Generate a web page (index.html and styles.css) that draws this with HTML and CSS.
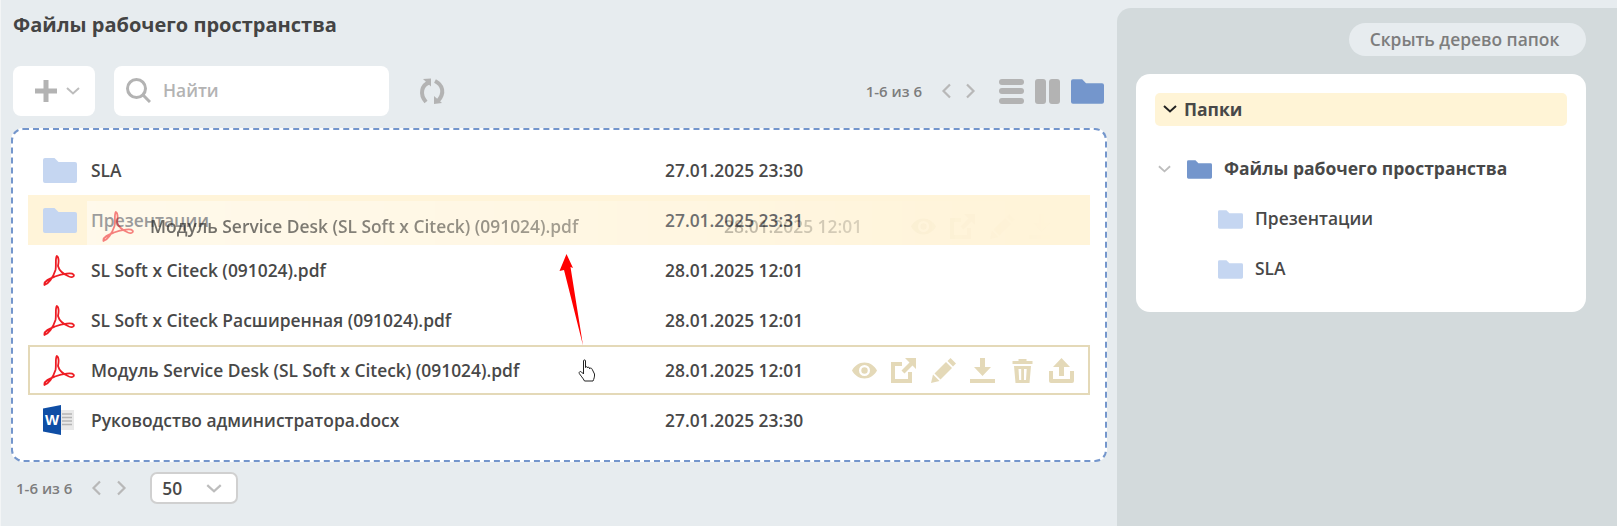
FILE: index.html
```html
<!DOCTYPE html>
<html lang="ru">
<head>
<meta charset="utf-8">
<title>Файлы рабочего пространства</title>
<link rel="stylesheet" href="styles.css">
</head>
<body>
<svg class="sprite" xmlns="http://www.w3.org/2000/svg">
  <defs>
    <symbol id="folder" viewBox="0 0 34 25"><path d="M2 0h9.500l4 4H32a2 2 0 0 1 2 2v17a2 2 0 0 1-2 2H2a2 2 0 0 1-2-2V2a2 2 0 0 1 2-2z"/></symbol>
    <symbol id="pdf" viewBox="0 0 32 31"><path fill="none" stroke-width="1.800" stroke-linejoin="round" d="M1.500 30C5 29 10 23 12.500 15 13.500 10 12 4 13.800 1 15.500 2 16 6 15 11c1 4 5 8 11 10.500 4 1.500 5.500-.5 4.500-2-1.500-2-10.500-1-18.500 2-5 2-11.500 4.500-10.500 8.500z"/></symbol>
    <symbol id="eye" viewBox="0 0 25 25"><path fill-rule="evenodd" d="M12.500 4.500C7 4.500 2.500 8 0 12.500c2.500 4.500 7 8 12.500 8s10-3.500 12.500-8c-2.500-4.500-7-8-12.500-8zm0 2.500a5.500 5.500 0 1 1 0 11 5.500 5.500 0 0 1 0-11z"/><circle cx="12.500" cy="12.500" r="3.200"/></symbol>
    <symbol id="open" viewBox="0 0 25 25"><path d="M0 4h11v4H4v13h13v-7h4v11H0z"/><path d="M14 0h11v11l-3.500-3.500-8 8-3-3 8-8z"/></symbol>
    <symbol id="pencil" viewBox="0 0 25 25"><path d="M0 25l2-8.500 6.500 6.500z"/><path d="M3.500 15.500L15 4l6 6L9.500 21.500z"/><path d="M16.500 3l3-3L25 5.500l-3 3z"/></symbol>
    <symbol id="download" viewBox="0 0 25 25"><path d="M10 0h5v9h6l-8.500 9L4 9h6z"/><path d="M0 21h25v4H0z"/></symbol>
    <symbol id="trash" viewBox="0 0 25 25"><path d="M2.500 3h6V1h8v2h6v3h-20z"/><path fill-rule="evenodd" d="M4 8h17l-1.500 17h-14zm4.500 3l.7 11h2V11zm5.500 0v11h2l.7-11z"/></symbol>
    <symbol id="upload" viewBox="0 0 25 25"><path d="M12.500 0L21 9h-6v9h-5V9H4z"/><path d="M0 13h4v8h17v-8h4v10a2 2 0 0 1-2 2H2a2 2 0 0 1-2-2z"/></symbol>
  </defs>
</svg>

<div class="page">
  <main class="main">
    <h1 class="title">Файлы рабочего пространства</h1>

    <div class="toolbar">
      <button class="add-btn" type="button">
        <svg class="plus" viewBox="0 0 22 22"><path d="M8.500 0h5v8.500H22v5h-8.500V22h-5v-8.500H0v-5h8.500z"/></svg>
        <svg class="chev-sm" viewBox="0 0 14 8"><path d="M1 1l6 5.500L13 1"/></svg>
      </button>
      <label class="search">
        <svg class="search-icon" viewBox="0 0 25 25"><circle cx="10.500" cy="10.500" r="9"/><path d="M17 17l7 7"/></svg>
        <span>Найти</span>
      </label>
      <svg class="reload" viewBox="0 0 26 25">
        <path class="reload-arc" d="M10 3.500C3 6 0 15 7 23"/>
        <path class="reload-arc" d="M16 2c8 4 10 12 3 20"/>
        <path d="M4 0l8-.5V7.500z"/>
        <path d="M15 17v8l8-1z"/>
      </svg>
      <div class="toolbar-right">
        <span class="pager-text">1-6 из 6</span>
        <div class="pager-arrows">
          <svg class="arrow" viewBox="0 0 11 16"><path d="M9 1.500L2.500 8 9 14.500"/></svg>
          <svg class="arrow" viewBox="0 0 11 16"><path d="M2 1.500L8.500 8 2 14.500"/></svg>
        </div>
        <div class="views">
          <div class="view-lines"><i></i><i></i><i></i></div>
          <div class="view-cols"><i></i><i></i></div>
          <svg class="folder-dark view-folder"><use href="#folder"/></svg>
        </div>
      </div>
    </div>

    <section class="files">
      <div class="list">
        <div class="row">
          <svg class="ficon folder-light"><use href="#folder"/></svg>
          <span class="name">SLA</span><span class="date">27.01.2025 23:30</span>
        </div>
        <div class="row row-drop">
          <svg class="ficon folder-light"><use href="#folder"/></svg>
          <span class="name">Презентации</span><span class="date">27.01.2025 23:31</span>
        </div>
        <div class="row">
          <svg class="ficon pdf"><use href="#pdf"/></svg>
          <span class="name">SL Soft x Citeck (091024).pdf</span><span class="date">28.01.2025 12:01</span>
        </div>
        <div class="row">
          <svg class="ficon pdf"><use href="#pdf"/></svg>
          <span class="name">SL Soft x Citeck Расширенная (091024).pdf</span><span class="date">28.01.2025 12:01</span>
        </div>
        <div class="row row-hover">
          <svg class="ficon pdf"><use href="#pdf"/></svg>
          <span class="name">Модуль Service Desk (SL Soft x Citeck) (091024).pdf</span><span class="date">28.01.2025 12:01</span>
          <div class="actions">
            <svg><use href="#eye"/></svg><svg><use href="#open"/></svg><svg><use href="#pencil"/></svg><svg><use href="#download"/></svg><svg><use href="#trash"/></svg><svg><use href="#upload"/></svg>
          </div>
        </div>
        <div class="row">
          <svg class="ficon word" viewBox="0 0 31 30">
            <path class="word-doc" d="M17 5h14v20H17z"/>
            <path class="word-lines" d="M19 9h10M19 12.500h10M19 16h10M19 19.500h10"/>
            <path class="word-cover" d="M0 3.500L18 0v30L0 26.500z"/>
            <text class="word-w" x="9" y="20" text-anchor="middle">W</text>
          </svg>
          <span class="name">Руководство администратора.docx</span><span class="date">27.01.2025 23:30</span>
        </div>

        <div class="row row-hover ghost">
          <svg class="ficon pdf"><use href="#pdf"/></svg>
          <span class="name">Модуль Service Desk (SL Soft x Citeck) (091024).pdf</span><span class="date">28.01.2025 12:01</span>
          <div class="actions">
            <svg><use href="#eye"/></svg><svg><use href="#open"/></svg><svg><use href="#pencil"/></svg><svg><use href="#download"/></svg><svg><use href="#trash"/></svg><svg><use href="#upload"/></svg>
          </div>
        </div>

        <svg class="red-arrow" viewBox="0 0 24 92"><path d="M7.500 0L14 14l-2.500-1L24 91.500 5 16l-4.500 1z"/></svg>
        <svg class="hand" viewBox="0 0 18 23"><path d="M5.500 2c0-1.500 2-1.500 2 0v6.500c0-1 2-1 2 0v.5c0-1 2-1 2 0v.8c0-1 2.300-1 2.600.4L16.500 15c.3 3-.7 5-1.500 7H6.500C5 19 2.500 16.500 1.300 14.500c-.8-1.500 1.200-2.700 2.200-1.500l2 2z"/></svg>
      </div>
    </section>

    <div class="footer">
      <span class="pager-text">1-6 из 6</span>
      <div class="pager-arrows">
        <svg class="arrow" viewBox="0 0 11 16"><path d="M9 1.500L2.500 8 9 14.500"/></svg>
        <svg class="arrow" viewBox="0 0 11 16"><path d="M2 1.500L8.500 8 2 14.500"/></svg>
      </div>
      <div class="select">
        <span>50</span>
        <svg class="chev-sm select-chev" viewBox="0 0 14 8"><path d="M1 1l6 5.500L13 1"/></svg>
      </div>
    </div>
  </main>

  <aside class="side">
    <button class="hide-btn" type="button">Скрыть дерево папок</button>
    <div class="tree-card">
      <div class="tree-head">
        <svg class="tree-head-chev" viewBox="0 0 14 8"><path d="M1 1l6 5.500L13 1"/></svg>
        <span>Папки</span>
      </div>
      <div class="tree">
        <div class="tree-row tree-root">
          <svg class="chev-sm tree-chev" viewBox="0 0 14 8"><path d="M1 1l6 5.500L13 1"/></svg>
          <svg class="tree-folder folder-dark"><use href="#folder"/></svg>
          <span>Файлы рабочего пространства</span>
        </div>
        <div class="tree-row tree-child">
          <svg class="tree-folder folder-light"><use href="#folder"/></svg>
          <span>Презентации</span>
        </div>
        <div class="tree-row tree-child">
          <svg class="tree-folder folder-light"><use href="#folder"/></svg>
          <span>SLA</span>
        </div>
      </div>
    </div>
  </aside>
</div>
</body>
</html>
```

FILE: styles.css
```css
* { box-sizing: border-box; }

html, body {
  margin: 0;
  height: 100%;
  overflow: hidden;
}

body {
  background: #e7ecef;
  color: #484848;
  font-family: "Open Sans", "Noto Sans", sans-serif;
  font-size: 17.400px;
  font-weight: 600;
}

.sprite {
  position: absolute;
  width: 0;
  height: 0;
}

.page {
  display: flex;
  height: 526px;
  border-left: 1px solid #f3f5f6;
}

/* left column */
.main {
  width: 1116px;
  flex: none;
  padding: 13px 10px 0 10px;
}

.title {
  margin: 0 0 0 2px;
  font-size: 20px;
  line-height: 24px;
  font-weight: 700;
  color: #444;
}

.toolbar {
  display: flex;
  align-items: center;
  height: 50px;
  margin: 29px 0 0 2px;
}

.add-btn {
  display: flex;
  align-items: center;
  gap: 9px;
  width: 82px;
  height: 50px;
  padding: 0 0 0 22px;
  border: 0;
  border-radius: 8px;
  background: #fff;
}

.plus {
  width: 22px;
  height: 22px;
  fill: #b3b3b3;
}

.chev-sm {
  width: 14px;
  height: 8px;
  fill: none;
  stroke: #bdbdbd;
  stroke-width: 2;
}

.search {
  display: flex;
  align-items: center;
  gap: 12px;
  width: 275px;
  height: 50px;
  margin-left: 19px;
  padding: 0 0 2px 12px;
  border-radius: 8px;
  background: #fff;
  color: #b3b3b3;
}

.search-icon {
  width: 25px;
  height: 25px;
  fill: none;
  stroke: #b3b3b3;
  stroke-width: 3;
}

.reload {
  width: 26px;
  height: 25px;
  margin-left: 30px;
  fill: #b3b3b3;
  overflow: visible;
}

.reload-arc {
  fill: none;
  stroke: #b3b3b3;
  stroke-width: 4;
}

.toolbar-right {
  display: flex;
  align-items: center;
  margin-left: auto;
  margin-right: 3px;
}

.pager-text {
  font-size: 15px;
  color: #7d7d7d;
}

.pager-arrows {
  display: flex;
  gap: 13px;
  margin-left: 19px;
}

.arrow {
  width: 11px;
  height: 16px;
  fill: none;
  stroke: #b8b8b8;
  stroke-width: 2.200;
}

.views {
  display: flex;
  align-items: center;
  gap: 11px;
  margin-left: 23px;
}

.view-lines {
  display: flex;
  flex-direction: column;
  gap: 3.500px;
  width: 25px;
}

.view-lines i {
  height: 6px;
  border-radius: 3px;
  background: #b3b3b3;
}

.view-cols {
  display: flex;
  gap: 3px;
  width: 25px;
  height: 25px;
}

.view-cols i {
  flex: 1;
  border-radius: 3px;
  background: #b3b3b3;
}

.view-folder {
  width: 33px;
  height: 25px;
}

.folder-dark { fill: #7496cc; }
.folder-light { fill: #c5d6f1; }

/* file list */
.files {
  margin-top: 12px;
  padding: 15px 15px 15px 15px;
  border: 2px dashed #7496cc;
  border-radius: 12px;
  background: #fff;
}

.list { position: relative; }

.row {
  display: grid;
  grid-template-columns: 48px 574px 1fr auto;
  align-items: center;
  height: 50px;
  padding: 0 14px 0 13px;
  border: 2px solid transparent;
}

.row-drop {
  background: #fff4d9;
  border-color: #fff4d9;
}

.row-hover { border-color: #e4d9b8; }

.ficon {
  width: 34px;
  height: 25px;
}

.pdf {
  width: 32px;
  height: 31px;
  stroke: #ee1d24;
}

.word {
  width: 31px;
  height: 30px;
}

.word-doc { fill: #e9e9e9; }

.word-lines {
  fill: none;
  stroke: #b5b5b5;
  stroke-width: 1.500;
}

.word-cover { fill: #0f4ea5; }

.word-w {
  fill: #fff;
  font-family: "Liberation Sans", sans-serif;
  font-size: 15px;
  font-weight: 700;
}

.actions {
  display: flex;
  gap: 14.400px;
  fill: #e4d9b8;
}

.actions svg {
  width: 25px;
  height: 25px;
}

/* drag ghost over the list */
.ghost {
  position: absolute;
  top: 56px;
  left: 59px;
  width: 1062px;
  border-color: transparent;
  background: rgba(255, 255, 255, .55);
  -webkit-mask-image: linear-gradient(90deg, rgba(0,0,0,.85) 0, rgba(0,0,0,.65) 300px, rgba(0,0,0,.35) 650px, rgba(0,0,0,.08) 880px, rgba(0,0,0,0) 970px);
  mask-image: linear-gradient(90deg, rgba(0,0,0,.85) 0, rgba(0,0,0,.65) 300px, rgba(0,0,0,.35) 650px, rgba(0,0,0,.08) 880px, rgba(0,0,0,0) 970px);
}

.ghost .pdf { opacity: .65; }

.red-arrow {
  position: absolute;
  top: 108px;
  left: 531px;
  width: 24px;
  height: 94px;
  fill: #ff0000;
}

.hand {
  position: absolute;
  top: 214px;
  left: 550px;
  width: 18px;
  height: 23px;
  fill: #fff;
  stroke: #222;
  stroke-width: 1;
}

/* footer */
.footer {
  display: flex;
  align-items: center;
  height: 32px;
  margin: 10px 0 0 5px;
}

.footer .pager-arrows {
  gap: 14px;
  margin-left: 19px;
}

.select {
  display: flex;
  align-items: center;
  justify-content: space-between;
  width: 88px;
  height: 32px;
  margin-left: 23px;
  padding: 0 14px 0 10px;
  border: 2px solid #d0d0d0;
  border-radius: 7px;
  background: #fff;
}

.select-chev {
  width: 16px;
  height: 9px;
}

/* right column */
.side {
  flex: 1;
  margin-top: 8px;
  padding: 15px 31px 0 19px;
  border-radius: 14px 0 0 0;
  background: #d3dadc;
}

.hide-btn {
  display: block;
  width: 237px;
  height: 33px;
  margin-left: auto;
  padding: 0 6px 1px 0;
  border: 0;
  border-radius: 17px;
  background: #e7ecef;
  color: #7d7d7d;
  font: inherit;
}

.tree-card {
  height: 238px;
  margin-top: 18px;
  padding: 19px;
  border-radius: 14px;
  background: #fff;
}

.tree-head {
  display: flex;
  align-items: center;
  gap: 7px;
  height: 33px;
  padding: 0 0 2px 8px;
  border-radius: 5px;
  background: #fff4d6;
  font-size: 17.500px;
  font-weight: 700;
}

.tree-head-chev {
  width: 14px;
  height: 8px;
  fill: none;
  stroke: #222;
  stroke-width: 2;
}

.tree { margin-top: 18px; }

.tree-row {
  display: flex;
  align-items: center;
  height: 50px;
}

.tree-row span { margin-top: -2px; }

.tree-folder {
  width: 25px;
  height: 19px;
}

.tree-root {
  font-size: 17.500px;
  font-weight: 700;
}

.tree-chev {
  width: 13px;
  margin: 0 16px 0 3px;
}

.tree-root .tree-folder { margin-right: 12px; }

.tree-child { padding-left: 63px; }

.tree-child .tree-folder { margin-right: 12px; }
```
